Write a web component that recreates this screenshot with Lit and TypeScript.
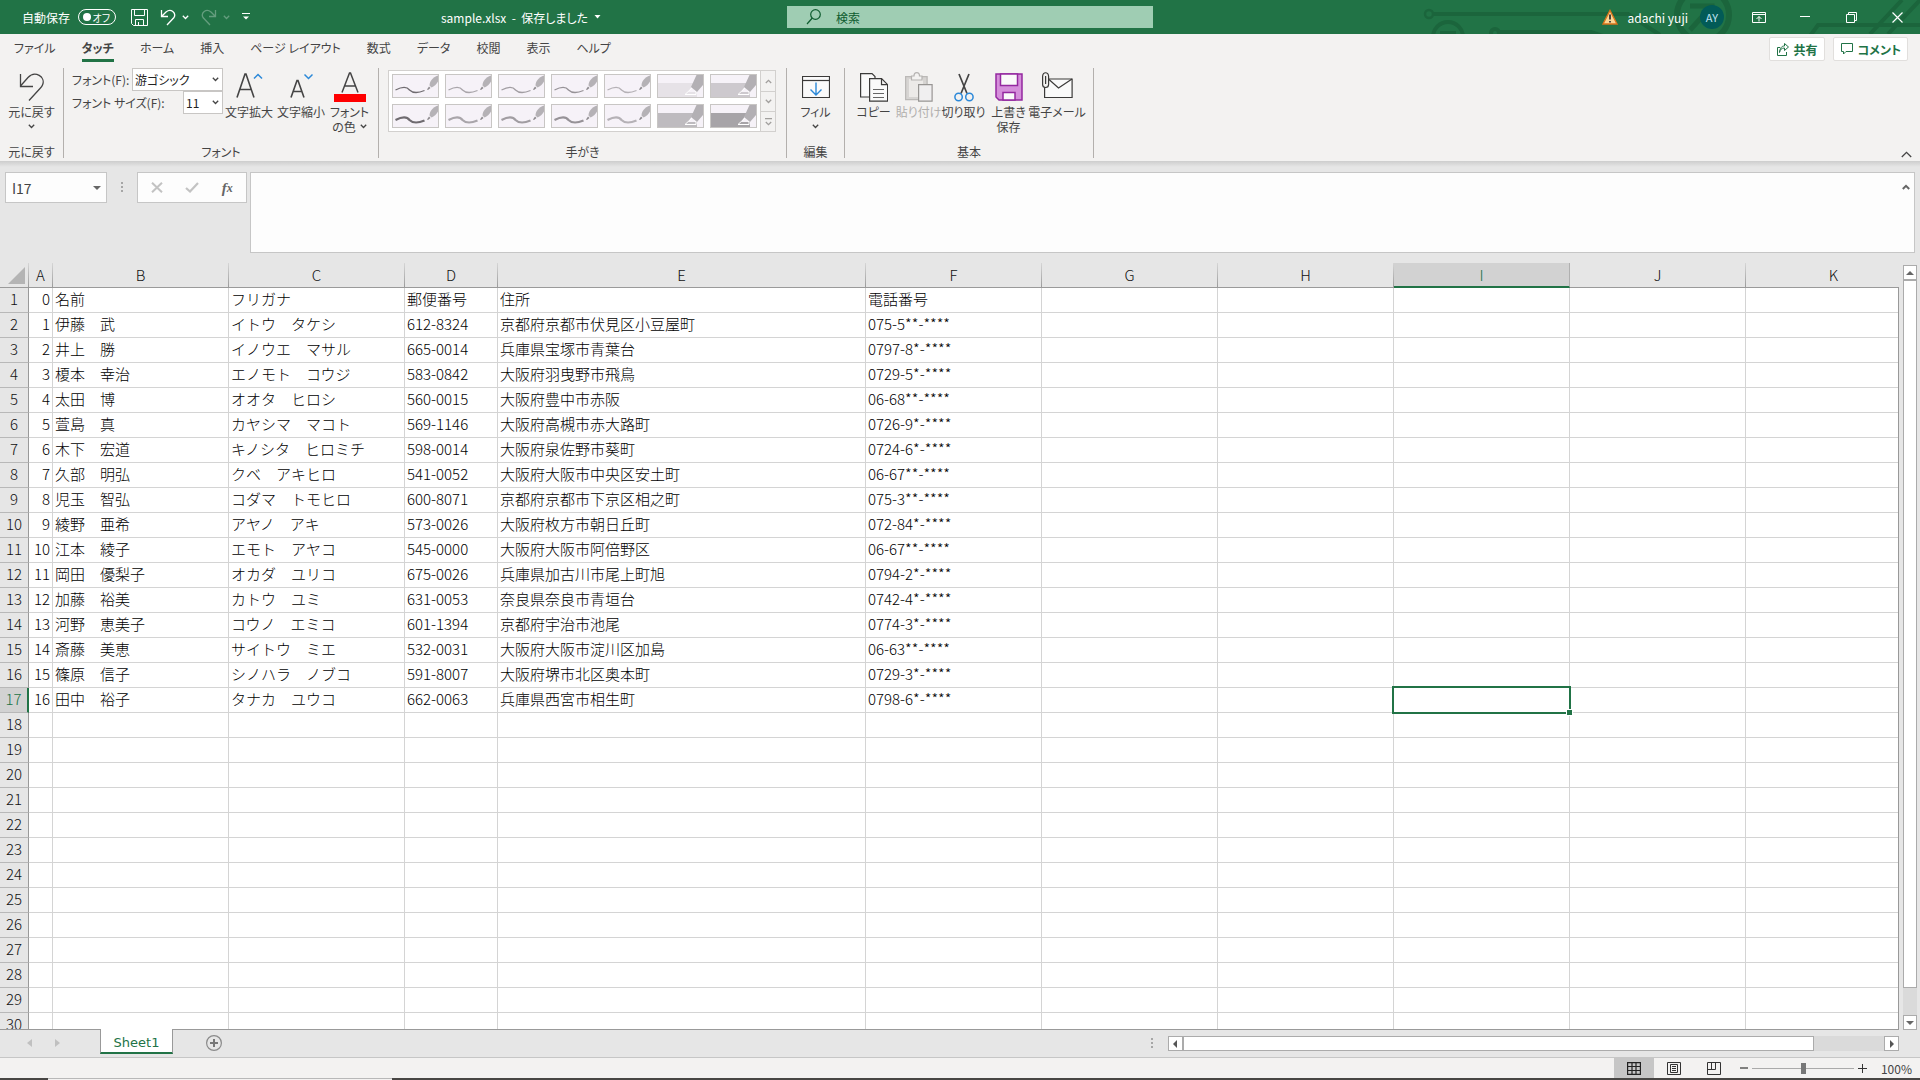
import { LitElement, html, svg, css, nothing } from "lit";
import { customElement, state } from "lit/decorators.js";
import { classMap } from "lit/directives/class-map.js";

const base = css`
  :host, *, ::before, ::after { box-sizing: border-box; }
  button, input, select, textarea {
    font: inherit; color: inherit; margin: 0; padding: 0; border: 0;
    background: none; border-radius: 0; outline: none;
  }
  button { display: flex; align-items: center; justify-content: center; cursor: default; }
  svg { display: block; flex: none; }
  svg:not([fill]) { fill: none; }
  h2, ul, p { margin: 0; padding: 0; font: inherit; list-style: none; }
`;

const caret = (color = "#444") => html`
  <svg width="7" height="5" viewBox="0 0 7 5" stroke=${color} stroke-width="1.3"><path d="M.8.8 3.5 3.5 6.2.8"/></svg>`;

@customElement("title-bar")
class TitleBar extends LitElement {
  static styles = [base, css`
    :host {
      display: grid; grid-template-columns: minmax(0, 787fr) 366px minmax(0, 767fr);
      height: 34px; background: #217346; color: #fff; position: relative; overflow: hidden;
      font-size: 12px;
    }
    .circuit { position: absolute; right: 0; top: 0; z-index: 0; }
    .left, .right { display: flex; align-items: center; position: relative; min-width: 0; }
    .left { padding-left: 22px; }
    .toggle {
      width: 38px; height: 16px; margin: 0 15px 0 8px; border: 1px solid #fff; border-radius: 8px;
      font-size: 10px; justify-content: space-between; padding: 0 5px 0 4px;
    }
    .dot { width: 8px; height: 8px; border-radius: 50%; background: #fff; }
    .quick { display: flex; align-items: center; gap: 12px; }
    .pair { display: flex; align-items: center; gap: 6px; }
    .pair button { height: 24px; }
    .dim { opacity: .3; }
    .doc { margin-left: auto; margin-right: 186px; gap: 6px; white-space: nowrap; }
    .search {
      display: flex; align-items: center; gap: 15px; height: 22px; margin-top: 6px;
      background: #9fcdb3; color: #0e5c2f; padding-left: 19px;
    }
    .search input { flex: 1; min-width: 0; height: 22px; }
    .search input::placeholder { color: #0e5c2f; opacity: 1; }
    .right { justify-content: flex-end; }
    .user { margin: 0 12px 0 10px; }
    .avatar {
      width: 24px; height: 24px; border-radius: 50%; background: #025b57; color: #bfe3f5;
      font-size: 11px; margin-right: 12px; font-feature-settings: normal;
    }
    .win { width: 46px; height: 34px; }
  `];

  render() {
    return html`
      <svg class="circuit" width="500" height="34" viewBox="0 0 500 34" stroke="#1b653c" stroke-width="4">
        <circle cx="9" cy="14" r="4" stroke-width="2.5"/><path d="M13 14H208L240 35"/>
        <circle cx="28" cy="37" r="15"/><path d="M20 33h16"/>
        <circle cx="75" cy="33" r="4"/><path d="M79 32h92l12 4"/>
        <circle cx="283" cy="15" r="26" stroke-width="6"/><path d="M270 6h22v16M292 6 270 30" stroke-width="5"/>
        <path d="M390 36 398 25H500M450 34 482 0M468 34 500 0"/>
      </svg>
      <div class="left">
        <span>自動保存</span>
        <button class="toggle" role="switch" aria-checked="false" aria-label="自動保存"><span class="dot"></span><span>オフ</span></button>
        <div class="quick">
          <button aria-label="上書き保存">
            <svg width="17" height="17" viewBox="0 0 17 17" stroke="#fff"><path d="M.5.5h16v16h-14l-2-2zM3.500.5v6h10v-6M4.500 16.500v-6h8v6M7.500 13v3.500"/></svg>
          </button>
          <div class="pair">
            <button aria-label="元に戻す"><svg width="16" height="17" viewBox="0 0 16 17" stroke="#fff" stroke-width="1.300"><path d="M1.500 1v6.500H8M1.500 7.500 6 3c5-4 10.500 1 8 5.500L7 16"/></svg></button>
            <button aria-label="元に戻す一覧">${caret("#fff")}</button>
          </div>
          <div class="pair dim">
            <button aria-label="やり直し" disabled><svg width="16" height="17" viewBox="0 0 16 17" stroke="#fff" stroke-width="1.300"><path d="M14.500 1v6.500H8M14.500 7.500 10 3C5-1-.500 4 2 8.500L9 16"/></svg></button>
            <button aria-label="やり直し一覧" disabled>${caret("#fff")}</button>
          </div>
          <button aria-label="クイック アクセス ツール バーのユーザー設定">
            <svg width="8" height="8" viewBox="0 0 8 8"><path d="M0 .5h8" stroke="#fff"/><path d="M1 3.500h6L4 6.500z" fill="#fff"/></svg>
          </button>
        </div>
        <button class="doc"><span>sample.xlsx&nbsp; -&nbsp; 保存しました</span><svg width="7" height="4" viewBox="0 0 7 4"><path d="M.5 0h6l-3 3.500z" fill="#fff"/></svg></button>
      </div>
      <label class="search">
        <svg width="15" height="16" viewBox="0 0 15 16" stroke="#0e5c2f" stroke-width="1.200"><circle cx="9.500" cy="5.500" r="4.800"/><path d="M6.300 9 1 15"/></svg>
        <input type="search" placeholder="検索" aria-label="検索">
      </label>
      <div class="right">
        <svg width="16" height="16" viewBox="0 0 16 16"><path d="M8 1.500 15 15H1z" fill="#fbd692" stroke="#d9731a" stroke-width="1.400"/><path d="M8 5.500v5M8 12v1.600" stroke="#333" stroke-width="1.800"/></svg>
        <span class="user">adachi yuji</span>
        <button class="avatar" aria-label="アカウント">AY</button>
        <button class="win" aria-label="リボンの表示オプション"><svg width="14" height="11" viewBox="0 0 14 11" stroke="#fff"><path d="M.5.5h13v10H.5zM.5 2.500h13M7 9.500V4.500M4.500 7 7 4.500 9.500 7"/></svg></button>
        <button class="win" aria-label="最小化"><svg width="10" height="2" viewBox="0 0 10 2"><path d="M0 .5h10" stroke="#fff"/></svg></button>
        <button class="win" aria-label="元に戻す (縮小)"><svg width="11" height="11" viewBox="0 0 11 11" stroke="#fff"><path d="M.5 2.500h8v8h-8zM2.500 2.500v-2h8v8h-2"/></svg></button>
        <button class="win" aria-label="閉じる"><svg width="11" height="11" viewBox="0 0 11 11" stroke="#fff" stroke-width="1.200"><path d="M.5.5l10 10M10.500.5l-10 10"/></svg></button>
      </div>`;
  }
}

const TABS = ["ファイル", "タッチ", "ホーム", "挿入", "ページ レイアウト", "数式", "データ", "校閲", "表示", "ヘルプ"];

type Swatch = { kind: "pen" | "marker"; color: string; width: number };
const SWATCHES: Swatch[] = [
  { kind: "pen", color: "#6f6b70", width: 1.3 },
  { kind: "pen", color: "#a9a5aa", width: 1.3 },
  { kind: "pen", color: "#a19da2", width: 1.3 },
  { kind: "pen", color: "#969297", width: 1.3 },
  { kind: "pen", color: "#b5b1b6", width: 1.3 },
  { kind: "marker", color: "#e6e2e7", width: 0 },
  { kind: "marker", color: "#cdc9ce", width: 0 },
  { kind: "pen", color: "#6f6b70", width: 2.2 },
  { kind: "pen", color: "#a9a5aa", width: 2.2 },
  { kind: "pen", color: "#a19da2", width: 2.2 },
  { kind: "pen", color: "#969297", width: 2.2 },
  { kind: "pen", color: "#b5b1b6", width: 2.2 },
  { kind: "marker", color: "#bebbbf", width: 0 },
  { kind: "marker", color: "#a7a4a8", width: 0 },
];

@customElement("ribbon-bar")
class RibbonBar extends LitElement {
  static styles = [base, css`
    :host { display: block; background: #f3f2f1; color: #444; font-size: 12px; position: relative; z-index: 1; }
    .tabs { display: flex; align-items: flex-start; height: 32px; padding: 0 12px 0 1px; }
    .tab { height: 28px; padding: 0 13px; white-space: nowrap; flex-direction: column; justify-content: flex-start; line-height: 28px; }
    .tab.on { font-weight: 700; }
    .tab.on::after { content: ""; display: block; align-self: stretch; height: 3px; margin-top: -3px; flex: none; background: #217346; }
    .share { margin-left: auto; display: flex; gap: 8px; padding-top: 3px; }
    .share button {
      height: 24px; padding: 0 6px; gap: 5px; background: #fff; border: 1px solid #e1dfdd;
      border-radius: 2px; color: #217346; font-size: 12px; font-weight: 700; white-space: nowrap;
    }
    .groups { display: flex; height: 95px; position: relative; padding-top: 2px; }
    .group { display: flex; flex-direction: column; height: 90px; border-right: 1px solid #b3b0ad; }
    .group h2 { margin-top: auto; text-align: center; line-height: 12px; }
    .body { display: flex; flex: 1; }
    .undo { width: 64px; }
    .font { width: 315px; }
    .font .body { padding-left: 8px; }
    .ink { width: 408px; }
    .edit { width: 58px; }
    .basic { width: 249px; }
    .basic .body { padding-left: 6px; }
    .big { flex-direction: column; justify-content: flex-start; flex: none; line-height: 15px; padding-top: 2px; white-space: nowrap; }
    .big .icon { height: 34px; display: flex; align-items: center; justify-content: center; }
    .big .label { display: flex; align-items: center; gap: 4px; }
    .big .more { height: 15px; display: flex; align-items: center; }
    .w64 { width: 63px; }
    .w53 { width: 52px; }
    .w45 { width: 45px; }
    .w58 { width: 57px; }
    .off { color: #b1afad; }
    .fields { width: 151px; flex: none; }
    .field { display: flex; align-items: center; justify-content: space-between; height: 23px; white-space: nowrap; }
    .field + .field { height: 22px; }
    .combo { display: grid; align-items: center; background: #fff; border: 1px solid #c8c6c4; height: 23px; color: #222; }
    .combo > * { grid-area: 1 / 1; }
    .combo select { appearance: none; width: 100%; padding-left: 2px; height: 21px; }
    .combo svg { justify-self: end; margin-right: 3px; pointer-events: none; }
    .name { width: 91px; }
    .size { width: 40px; }
    .gallery { display: flex; margin: 2px 0 0 9px; height: 62px; width: 388px; border: 1px solid #d2d0ce; background: #fff; }
    .swatches { flex: 1; display: grid; grid-template-columns: repeat(7, 47px); gap: 6px; padding: 3px; align-content: start; }
    .swatch { border: 1px solid #c8c6c4; background: #f6f2f8; height: 24px; overflow: hidden; }
    .scroll { width: 15px; display: grid; grid-template-rows: 1fr 1fr 1fr; background: #f3f2f1; border-left: 1px solid #d2d0ce; }
    .scroll button + button { border-top: 1px solid #d2d0ce; }
    .collapse { position: absolute; right: 6px; bottom: 2px; width: 15px; height: 10px; }
  `];

  @state() private active = 1;

  private swatch(s: Swatch) {
    return html`<button class="swatch" aria-label="ペン">
      <svg width="45" height="22" viewBox="0 0 45 22">
        ${s.kind === "pen"
          ? svg`<path d="M2.500 15c6-3 11-4 14 0 4 4 9 3 15 .5" stroke=${s.color} stroke-width=${s.width}/>
              <path d="M34 14.500l2-3 1.500 1.500-2.500 2z" fill="#8d8a8e"/>
              <path d="M36.500 10.500c0-4 3-8 8.500-10v6c-1.500 3-4 5-6.500 6z" fill="#b5b2b6"/>`
          : svg`<path d="M0 8h36l-9 14H0z" fill=${s.color}/><path d="M27 17h12v5H24z" fill=${s.color}/>
              <path d="M27 19.500 35 12l3 5v2.500z" stroke="#fff"/>
              <path d="M33 12 38.500 0H45v10l-6 7z" fill="#b3b0b4"/>`}
      </svg></button>`;
  }

  render() {
    return html`
      <div class="tabs">
        ${TABS.map((t, i) => html`<button class=${classMap({ tab: true, on: i === this.active })} @click=${() => (this.active = i)}>${t}</button>`)}
        <div class="share">
          <button><svg width="13" height="13" viewBox="0 0 13 13" stroke="#217346"><path d="M4 4.500H1.500v8h9V9M3.500 9.500c.5-3 2-4.500 5-4.500V7.500l4-3.500-4-3.500V3C5.500 3 4 5 3.500 9.500z"/></svg>共有</button>
          <button><svg width="13" height="12" viewBox="0 0 13 12" stroke="#217346"><path d="M1.500.5h11v8H6L3.500 11V8.500h-2z"/></svg>コメント</button>
        </div>
      </div>
      <div class="groups">
        <section class="group undo">
          <div class="body">
            <button class="big w64"><span class="icon"><svg width="26" height="28" viewBox="0 0 26 28" stroke="#444" stroke-width="1.300"><path d="M1.500 1v12.500H14M1.500 13 9 4.500C16-3 27 4 23.500 12c-.5 1.500-1.500 2.500-2.500 3.500L10 27.500"/></svg></span>
              <span class="label">元に戻す</span><span class="more">${caret()}</span></button>
          </div>
          <h2>元に戻す</h2>
        </section>
        <section class="group font">
          <div class="body">
            <div class="fields">
              <div class="field"><label for="fname">フォント(F):</label>
                <span class="combo name"><select id="fname"><option>游ゴシック</option></select>${caret()}</span></div>
              <div class="field"><label for="fsize">フォント サイズ(F):</label>
                <span class="combo size"><select id="fsize"><option>11</option></select>${caret()}</span></div>
            </div>
            <button class="big w53"><span class="icon"><svg width="28" height="30" viewBox="0 0 28 30"><path d="M2 25.500 10 2h1l8 23.500M5 17.500h11" stroke="#444" stroke-width="1.600"/><path d="M19 6.500 23 2.500l4 4" stroke="#2b88d8" stroke-width="1.500"/></svg></span><span class="label">文字拡大</span></button>
            <button class="big w53"><span class="icon"><svg width="24" height="30" viewBox="0 0 24 30"><path d="M2 25.500 8 8.500h1l6 17M4.500 19.500h8" stroke="#444" stroke-width="1.600"/><path d="M15.500 2.500l4 4 4-4" stroke="#2b88d8" stroke-width="1.500"/></svg></span><span class="label">文字縮小</span></button>
            <button class="big w45"><span class="icon"><svg width="32" height="30" viewBox="0 0 32 30"><path d="M8 20.500 15.500 1h1L24 20.500M10.500 14h11" stroke="#444" stroke-width="1.500"/><path d="M0 22h32v8H0z" fill="#f00"/></svg></span>
              <span class="label">フォント</span><span class="label">の色 ${caret()}</span></button>
          </div>
          <h2>フォント</h2>
        </section>
        <section class="group ink">
          <div class="gallery">
            <div class="swatches">${SWATCHES.map((s) => this.swatch(s))}</div>
            <div class="scroll">
              <button aria-label="前の行"><svg width="7" height="5" viewBox="0 0 7 5" stroke="#a19f9d" stroke-width="1.300"><path d="M.8 4 3.500 1.300 6.200 4"/></svg></button>
              <button aria-label="次の行">${caret("#a19f9d")}</button>
              <button aria-label="その他"><svg width="7" height="8" viewBox="0 0 7 8" stroke="#a19f9d" stroke-width="1.300"><path d="M0 .7h7M.8 4 3.500 6.700 6.200 4"/></svg></button>
            </div>
          </div>
          <h2>手がき</h2>
        </section>
        <section class="group edit">
          <div class="body">
            <button class="big w58"><span class="icon"><svg width="28" height="24" viewBox="0 0 28 24"><path d="M.5 1.500h27v21H.5z" fill="#fafafa" stroke="#3b3a39" stroke-width="1.200"/><path d="M.5 5.500h27" stroke="#3b3a39" stroke-width="1.200"/><path d="M14 7.500v12M8.500 14.500 14 20l5.500-5.500" stroke="#2b88d8" stroke-width="1.400"/></svg></span>
              <span class="label">フィル</span><span class="more">${caret()}</span></button>
          </div>
          <h2>編集</h2>
        </section>
        <section class="group basic">
          <div class="body">
            <button class="big w45"><span class="icon"><svg width="28" height="29" viewBox="0 0 28 29" fill="#fafafa" stroke="#3b3a39" stroke-width="1.200"><path d="M9 24H.6V.6H12l3 3V24z"/><path d="M9.600 5.600h12l6 6v16.500h-18zM21.500 5.600v6h6"/><path d="M13 16.500h11M13 20.500h11M13 24.500h11" stroke="#666"/></svg></span><span class="label">コピー</span></button>
            <button class="big w45 off" disabled><span class="icon"><svg width="28" height="30" viewBox="0 0 28 30"><path d="M.6 4.600h21.500v23H.6z" fill="#d6d4d2" stroke="#bbb9b7" stroke-width="1.300"/><path d="M4 7h14v18H4z" fill="#eceae8"/><path d="M6.500 8V4H9c0-4.500 5.500-4.500 5.500 0H17v4z" fill="#f3f2f1" stroke="#b5b3b1" stroke-width="1.200"/><path d="M13.600 12.600h13.500v16.500H13.600z" fill="#f0eff0" stroke="#979593" stroke-width="1.200"/></svg></span><span class="label">貼り付け</span></button>
            <button class="big w45"><span class="icon"><svg width="20" height="29" viewBox="0 0 20 29"><path d="M5 1 13 20.500M15 1 7 20.500" stroke="#444" stroke-width="1.700"/><circle cx="4.600" cy="24" r="3.700" stroke="#2b88d8" stroke-width="1.500"/><circle cx="15.400" cy="24" r="3.700" stroke="#2b88d8" stroke-width="1.500"/></svg></span><span class="label">切り取り</span></button>
            <button class="big w45"><span class="icon"><svg width="28" height="28" viewBox="0 0 28 28" stroke="#9429a0" stroke-width="1.500"><path d="M1 1h26v26H4l-3-3z" fill="#d58fdb"/><path d="M5.500 1h17v11.500h-17zM8 27v-7.500h12V27z" fill="#fafafa"/></svg></span><span class="label">上書き</span><span class="label">保存</span></button>
            <button class="big w53"><span class="icon"><svg width="31" height="30" viewBox="0 0 31 30"><path d="M2.600 7h27.500v18.500H2.600z" fill="#fafafa" stroke="#3b3a39" stroke-width="1.200"/><path d="M7 7.500 16.500 16 30 7" stroke="#3b3a39" stroke-width="1.200"/><path d="M.6 4.500c0-5 6-5 6 0v8c0 4-6 4-6 0zM3.600 4v8" fill="#f3f2f1" stroke="#3b3a39" stroke-width="1.200"/></svg></span><span class="label">電子メール</span></button>
          </div>
          <h2>基本</h2>
        </section>
        <button class="collapse" aria-label="リボンを折りたたむ"><svg width="11" height="7" viewBox="0 0 11 7" stroke="#444" stroke-width="1.300"><path d="M.8 6 5.500 1.300 10.200 6"/></svg></button>
      </div>`;
  }
}

@customElement("formula-bar")
class FormulaBar extends LitElement {
  static styles = [base, css`
    :host {
      display: flex; align-items: flex-start; height: 102px; padding: 11px 5px 0; color: #444;
      background: linear-gradient(#cdcdcd, #e6e6e6 6px); font-size: 14px;
    }
    .box { display: flex; align-items: center; height: 31px; background: #fdfdfd; border: 1px solid #c6c6c6; }
    .name { width: 102px; padding: 0 5px 0 6px; }
    .name input { flex: 1; min-width: 0; height: 29px; }
    .name button { width: 8px; height: 20px; }
    .grip { margin: 10px 14px 0; }
    .tools { width: 110px; justify-content: space-around; padding: 0 1px; }
    .tools button { width: 30px; height: 28px; }
    .fx { font: italic 700 15px/20px "Liberation Serif", serif; color: #666; }
    .fx small { font-size: 12px; }
    .edit { flex: 1; margin-left: 3px; height: 81px; align-items: flex-start; }
    .edit textarea { flex: 1; height: 79px; resize: none; padding: 5px; }
    .edit button { width: 16px; height: 28px; }
  `];
  render() {
    return html`
      <div class="box name"><input aria-label="名前ボックス" value="I17">
        <button aria-label="名前一覧"><svg width="8" height="4" viewBox="0 0 8 4"><path d="M0 0h8L4 4z" fill="#666"/></svg></button></div>
      <svg class="grip" width="2" height="11" viewBox="0 0 2 11" fill="#a6a6a6"><path d="M0 0h2v2H0zM0 4h2v2H0zM0 8h2v2H0z"/></svg>
      <div class="box tools">
        <button aria-label="キャンセル"><svg width="12" height="11" viewBox="0 0 12 11" stroke="#c3c3c3" stroke-width="2"><path d="M1 .7 11 10.300M11 .7 1 10.300"/></svg></button>
        <button aria-label="入力"><svg width="14" height="11" viewBox="0 0 14 11" stroke="#c3c3c3" stroke-width="2.200"><path d="M1 6l4 3.500L13 1"/></svg></button>
        <button class="fx" aria-label="関数の挿入">f<small>x</small></button>
      </div>
      <div class="box edit"><textarea aria-label="数式バー"></textarea>
        <button aria-label="数式バーの折りたたみ"><svg width="8" height="6" viewBox="0 0 8 6" stroke="#666" stroke-width="2"><path d="M.8 5 4 1.800 7.200 5"/></svg></button></div>`;
  }
}

const COLUMNS: [string, number][] = [
  ["A", 24], ["B", 176], ["C", 176], ["D", 93], ["E", 368], ["F", 176],
  ["G", 176], ["H", 176], ["I", 176], ["J", 176], ["K", 176],
];
const ROWS: string[][] = [
  ["0", "名前", "フリガナ", "郵便番号", "住所", "電話番号"],
  ["1", "伊藤　武", "イトウ　タケシ", "612-8324", "京都府京都市伏見区小豆屋町", "075-5**-****"],
  ["2", "井上　勝", "イノウエ　マサル", "665-0014", "兵庫県宝塚市青葉台", "0797-8*-****"],
  ["3", "榎本　幸治", "エノモト　コウジ", "583-0842", "大阪府羽曳野市飛鳥", "0729-5*-****"],
  ["4", "太田　博", "オオタ　ヒロシ", "560-0015", "大阪府豊中市赤阪", "06-68**-****"],
  ["5", "萱島　真", "カヤシマ　マコト", "569-1146", "大阪府高槻市赤大路町", "0726-9*-****"],
  ["6", "木下　宏道", "キノシタ　ヒロミチ", "598-0014", "大阪府泉佐野市葵町", "0724-6*-****"],
  ["7", "久部　明弘", "クベ　アキヒロ", "541-0052", "大阪府大阪市中央区安土町", "06-67**-****"],
  ["8", "児玉　智弘", "コダマ　トモヒロ", "600-8071", "京都府京都市下京区相之町", "075-3**-****"],
  ["9", "綾野　亜希", "アヤノ　アキ", "573-0026", "大阪府枚方市朝日丘町", "072-84*-****"],
  ["10", "江本　綾子", "エモト　アヤコ", "545-0000", "大阪府大阪市阿倍野区", "06-67**-****"],
  ["11", "岡田　優梨子", "オカダ　ユリコ", "675-0026", "兵庫県加古川市尾上町旭", "0794-2*-****"],
  ["12", "加藤　裕美", "カトウ　ユミ", "631-0053", "奈良県奈良市青垣台", "0742-4*-****"],
  ["13", "河野　恵美子", "コウノ　エミコ", "601-1394", "京都府宇治市池尾", "0774-3*-****"],
  ["14", "斎藤　美恵", "サイトウ　ミエ", "532-0031", "大阪府大阪市淀川区加島", "06-63**-****"],
  ["15", "篠原　信子", "シノハラ　ノブコ", "591-8007", "大阪府堺市北区奥本町", "0729-3*-****"],
  ["16", "田中　裕子", "タナカ　ユウコ", "662-0063", "兵庫県西宮市相生町", "0798-6*-****"],
];
const ROW_COUNT = 30;

@customElement("sheet-grid")
class SheetGrid extends LitElement {
  static styles = [base, css`
    :host { display: flex; min-height: 0; background: #e6e6e6; padding-right: 3px; }
    .pane { flex: 1; min-width: 0; overflow: hidden; margin-right: 4px; position: relative; }
    .pane::after {
      content: ""; position: absolute; inset: 24px 0 0 0; border-right: 1px solid #999;
      border-bottom: 1px solid #999; pointer-events: none;
    }
    table { border-collapse: separate; border-spacing: 0; table-layout: fixed; width: 0; font-size: 15px; font-weight: 300; color: #000; background: #fff; }
    th, td { padding: 0; height: 25px; line-height: 22px; white-space: nowrap; overflow: hidden; vertical-align: top; }
    th { font-weight: 300; background: #e6e6e6; color: #111; }
    thead th {
      border-bottom: 1px solid #999; border-right: 1px solid; line-height: 23px;
      border-image: linear-gradient(#d8d8d8, #999) 1;
    }
    tbody th { border-right: 1px solid #999; border-bottom: 1px solid #b8b8b8; }
    td { border-right: 1px solid #d4d4d4; border-bottom: 1px solid #d4d4d4; padding-left: 2px; text-align: left; }
    td.num { text-align: right; padding: 0 2px 0 0; }
    th.on { background: #d2d2d2; color: #217346; }
    thead th.on { border-image: none; border-bottom: 2px solid #217346; border-right-color: #b0b0b0; }
    tbody th.on { border-right: 2px solid #217346; }
    td.sel { position: relative; overflow: visible; }
    .cursor { position: absolute; inset: -2px; border: 2px solid #217346; pointer-events: none; }
    .cursor::after {
      content: ""; position: absolute; right: -4px; bottom: -4px; width: 7px; height: 7px;
      background: #217346; border: 1px solid #fff;
    }
    .corner svg { margin: 4px 3px 0 auto; }
    .vbar { width: 14px; display: flex; flex-direction: column; background: #dadada; margin: 2px 0 0; }
    .vbar button, .thumb { border: 1px solid #ababab; background: #fff; }
    .vbar button { height: 15px; }
    .thumb { flex: 1; margin-bottom: 27px; }
  `];
  render() {
    return html`
      <div class="pane">
        <table>
          <colgroup><col style="width:29px">${COLUMNS.map(([, w]) => html`<col style="width:${w}px">`)}</colgroup>
          <thead><tr>
            <th class="corner"><svg width="17" height="17" viewBox="0 0 17 17"><path d="M17 0v17H0z" fill="#b4b4b4"/></svg></th>
            ${COLUMNS.map(([n]) => html`<th scope="col" class=${n === "I" ? "on" : ""}>${n}</th>`)}
          </tr></thead>
          <tbody>
            ${Array.from({ length: ROW_COUNT }, (_, r) => html`<tr>
              <th scope="row" class=${r === 16 ? "on" : ""}>${r + 1}</th>
              ${COLUMNS.map(([n], c) => {
                const sel = r === 16 && n === "I";
                return html`<td class=${classMap({ num: c === 0, sel })}>${ROWS[r]?.[c] ?? nothing}${sel ? html`<div class="cursor"></div>` : nothing}</td>`;
              })}
            </tr>`)}
          </tbody>
        </table>
      </div>
      <div class="vbar">
        <button aria-label="上へスクロール"><svg width="8" height="4" viewBox="0 0 8 4"><path d="M0 4h8L4 0z" fill="#666"/></svg></button>
        <div class="thumb"></div>
        <button aria-label="下へスクロール"><svg width="8" height="4" viewBox="0 0 8 4"><path d="M0 0h8L4 4z" fill="#666"/></svg></button>
      </div>`;
  }
}

@customElement("sheet-footer")
class SheetFooter extends LitElement {
  static styles = [base, css`
    :host { display: block; font-size: 12px; color: #444; }
    .tabs { display: flex; height: 28px; background: #e6e6e6; border-bottom: 1px solid #c6c6c6; padding-right: 21px; }
    .nav { display: flex; gap: 23px; align-items: center; width: 100px; padding-left: 27px; height: 25px; }
    .sheet {
      width: 73px; height: 25px; background: #fff; color: #217346; border: 1px solid #999; border-top: 0;
      border-bottom: 2px solid #217346; margin: -1px 33px 0 0; padding-top: 3px;
      font: 13px "DejaVu Sans", sans-serif; position: relative; z-index: 1;
    }
    .add { height: 25px; }
    .grip { margin: 8px 15px 0 auto; }
    .hbar { width: 38.5%; display: flex; height: 15px; margin-top: 6px; background: #dadada; }
    .hbar button, .thumb { border: 1px solid #ababab; background: #fff; }
    .hbar button { width: 15px; }
    .thumb { flex: 1; margin-right: 70px; }
    .status { display: flex; align-items: center; height: 20px; background: #f3f2f1; padding-right: 8px; }
    .view { width: 40px; height: 20px; }
    .view.on { background: #c6c6c6; }
    .views { display: flex; margin: 0 2px 0 auto; }
    .zoom { width: 16px; height: 20px; }
    input { appearance: none; width: 102px; height: 20px; background: linear-gradient(#aaa, #aaa) 0 10px / 100% 1px no-repeat; }
    input::-webkit-slider-thumb { appearance: none; width: 5px; height: 11px; background: #777; }
    .pct { width: 42px; justify-content: flex-end; }
    .edge { display: flex; height: 2px; background: #484644; }
    .edge span { width: 344px; margin-left: 48px; background: #f3f2f1; border-top: 1px solid #b8b8b8; }
  `];
  render() {
    return html`
      <div class="tabs">
        <div class="nav">
          <button aria-label="前のシート"><svg width="5" height="8" viewBox="0 0 5 8"><path d="M5 0v8L0 4z" fill="#c0c0c0"/></svg></button>
          <button aria-label="次のシート"><svg width="5" height="8" viewBox="0 0 5 8"><path d="M0 0v8l5-4z" fill="#c0c0c0"/></svg></button>
        </div>
        <button class="sheet">Sheet1</button>
        <button class="add" aria-label="新しいシート"><svg width="16" height="16" viewBox="0 0 16 16"><circle cx="8" cy="8" r="7.400" stroke="#8a8a8a" stroke-width="1.200"/><path d="M4 8h8M8 4v8" stroke="#777" stroke-width="2"/></svg></button>
        <svg class="grip" width="2" height="11" viewBox="0 0 2 11" fill="#a6a6a6"><path d="M0 0h2v2H0zM0 4h2v2H0zM0 8h2v2H0z"/></svg>
        <div class="hbar">
          <button aria-label="左へスクロール"><svg width="4" height="8" viewBox="0 0 4 8"><path d="M4 0v8L0 4z" fill="#555"/></svg></button>
          <div class="thumb"></div>
          <button aria-label="右へスクロール"><svg width="4" height="8" viewBox="0 0 4 8"><path d="M0 0v8l4-4z" fill="#555"/></svg></button>
        </div>
      </div>
      <div class="status">
        <div class="views">
          <button class="view on" aria-label="標準"><svg width="14" height="13" viewBox="0 0 14 13" stroke="#222" stroke-width="1.200"><path d="M.6.6h12.800v11.800H.6zM.6 4.500h12.800M.6 8.500h12.800M5 .6v11.800M9 .6v11.800"/></svg></button>
          <button class="view" aria-label="ページ レイアウト"><svg width="14" height="13" viewBox="0 0 14 13" stroke="#333"><path d="M.5.5h13v12H.5zM3.500 2.500h7v8h-7zM5 4.500h4M5 6.500h4M5 8.500h4"/></svg></button>
          <button class="view" aria-label="改ページ プレビュー"><svg width="14" height="13" viewBox="0 0 14 13" stroke="#333"><path d="M.5.5h13v12H.5zM.5 7.500h8v-7M4.500.5v7"/></svg></button>
        </div>
        <button class="zoom" aria-label="縮小"><svg width="8" height="2" viewBox="0 0 8 2"><path d="M0 1h8" stroke="#333" stroke-width="1.200"/></svg></button>
        <input type="range" min="10" max="190" value="100" aria-label="ズーム">
        <button class="zoom" aria-label="拡大"><svg width="9" height="9" viewBox="0 0 9 9"><path d="M0 4.500h9M4.500 0v9" stroke="#333"/></svg></button>
        <button class="pct">100%</button>
      </div>
      <div class="edge"><span></span></div>`;
  }
}

@customElement("app-root")
class AppRoot extends LitElement {
  static styles = css`
    :host {
      display: flex; flex-direction: column; height: 100vh; overflow: hidden; background: #e6e6e6;
      font-family: "Noto Sans CJK JP", sans-serif; font-size: 12px;
    }
    title-bar, ribbon-bar, sheet-footer { font-feature-settings: "palt"; flex: none; }
    formula-bar { flex: none; }
    sheet-grid { flex: 1; }
  `;
  render() {
    return html`<title-bar></title-bar><ribbon-bar></ribbon-bar><formula-bar></formula-bar><sheet-grid></sheet-grid><sheet-footer></sheet-footer>`;
  }
}
